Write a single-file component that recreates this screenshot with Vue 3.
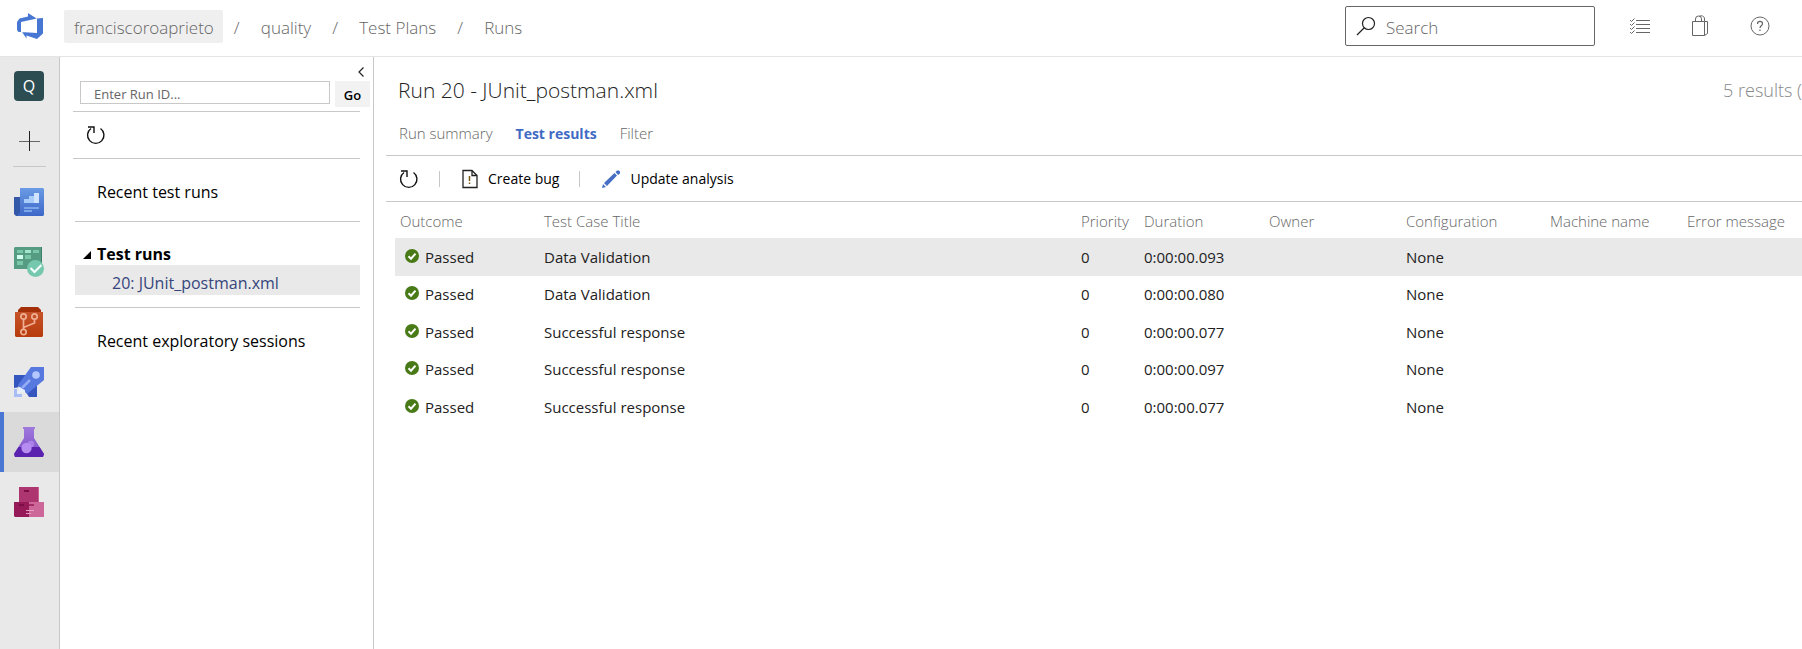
<script setup>
const crumbs = ['quality', 'Test Plans', 'Runs']

const services = [
  { id: 'boards', label: 'Overview' },
  { id: 'work', label: 'Boards' },
  { id: 'repos', label: 'Repos' },
  { id: 'pipelines', label: 'Pipelines' },
  { id: 'tests', label: 'Test Plans', active: true },
  { id: 'artifacts', label: 'Artifacts' },
]

const columns = [
  { key: 'outcome', label: 'Outcome' },
  { key: 'title', label: 'Test Case Title' },
  { key: 'priority', label: 'Priority' },
  { key: 'duration', label: 'Duration' },
  { key: 'owner', label: 'Owner' },
  { key: 'configuration', label: 'Configuration' },
  { key: 'machine', label: 'Machine name' },
  { key: 'error', label: 'Error message' },
]

const results = [
  { title: 'Data Validation', duration: '0:00:00.093', selected: true },
  { title: 'Data Validation', duration: '0:00:00.080' },
  { title: 'Successful response', duration: '0:00:00.077' },
  { title: 'Successful response', duration: '0:00:00.097' },
  { title: 'Successful response', duration: '0:00:00.077' },
]
</script>

<template>
  <div class="shell">
    <header class="topbar">
      <a class="logo" href="#" aria-label="Home">
        <svg width="26" height="26" viewBox="0 0 26 26">
          <path
            fill="#4877d3"
            fill-rule="evenodd"
            d="M0 9l2.500-3.500L11 3.500V0l8.500 5.500L26 5v15.500L20 26 9.500 22.500V25.500L5 19H1.500L0 17zM4 9v10l16 1V5.500z"
          />
        </svg>
      </a>
      <nav class="crumbs" aria-label="Breadcrumb">
        <a class="org" href="#">franciscoroaprieto</a>
        <template v-for="crumb in crumbs" :key="crumb">
          <span class="slash">/</span>
          <a href="#">{{ crumb }}</a>
        </template>
      </nav>
      <label class="search">
        <svg width="20" height="20" viewBox="0 0 20 20" fill="none" stroke="#222">
          <circle cx="12.500" cy="7.500" r="6" stroke-width="1.200" />
          <path d="M8.500 11.500 1 19" stroke-width="1.300" />
        </svg>
        <input type="text" placeholder="Search" aria-label="Search" />
      </label>
      <div class="top-actions">
        <button type="button" aria-label="Work items">
          <svg width="20" height="16" viewBox="0 0 20 16" fill="none" stroke="#666">
            <path d="M6 2.500h14M6 6.500h14M6 10.500h14M6 14.500h14" />
            <path d="M0 2l1.500 1.500L4.500.5M0 6l1.500 1.500 3-3M0 10l1.500 1.500 3-3M0 14l1.500 1.500 3-3" />
          </svg>
        </button>
        <button type="button" aria-label="Marketplace">
          <svg width="18" height="22" viewBox="0 0 18 22" fill="none" stroke="#666">
            <path d="M1.500 6.500h12v14h-12zM13.500 6.500h3v12l-3 2M4.500 6.500V4a3 3 0 0 1 6 0v2.500M8 1.500c2.500-1.500 5.500-.5 5.500 2.500v2.500" />
          </svg>
        </button>
        <button type="button" aria-label="Help">
          <svg width="20" height="20" viewBox="0 0 20 20" fill="none" stroke="#666">
            <circle cx="10" cy="10" r="9" />
            <path d="M7.500 8c0-3.500 5-3.200 5-.3 0 2-2.500 2.200-2.500 4.300M10 13.500v1.500" stroke-width="1.200" />
          </svg>
        </button>
      </div>
    </header>

    <div class="body">
      <nav class="rail" aria-label="Services">
        <a class="project" href="#">Q</a>
        <button class="add" type="button" aria-label="Add">
          <svg width="22" height="22" viewBox="0 0 22 22" stroke-width="1">
            <path d="M0 11.500h21" stroke="#666" />
            <path d="M10.500 1v20" stroke="#222" />
          </svg>
        </button>
        <div class="rail-line"></div>
        <a
          v-for="service in services"
          :key="service.id"
          class="service"
          :class="{ active: service.active }"
          href="#"
          :aria-label="service.label"
        >
          <svg v-if="service.id === 'boards'" width="30" height="30" viewBox="0 0 30 30">
            <defs>
              <linearGradient id="gOverview" x1="0" y1="0" x2="0" y2="1">
                <stop offset="0" stop-color="#6a9be4" />
                <stop offset="1" stop-color="#3e68c8" />
              </linearGradient>
            </defs>
            <path d="M0 10h6v19H2l-2-2z" fill="#3358a8" />
            <path d="M6 1h23l1 1v26l-1 1H3l3-3z" fill="url(#gOverview)" />
            <path d="M10 16v-4h5v-3h5V6h5v10z" fill="#a9cdfa" />
            <path d="M20 6h5v10h-5z" fill="#d0e4ff" />
            <path d="M10 20h15v2H10zM10 23h8v2h-8z" fill="#7ba6ea" />
          </svg>
          <svg v-else-if="service.id === 'work'" width="30" height="30" viewBox="0 0 30 30">
            <path d="M1 0h26v22H0V1z" fill="#569c83" />
            <path d="M27 0h1v20h-1z" fill="#3e8069" />
            <path d="M3 3h6v3H3zM19 3h6v3h-6zM11 8h6v4h-6zM3 14h6v4H3z" fill="#79c6a9" />
            <path d="M11 3h6v3h-6z" fill="#a0e5cc" />
            <path d="M3 8h6v4H3z" fill="#d0fff0" />
            <circle cx="21.500" cy="21.500" r="8.500" fill="#75c8ad" />
            <path d="m16.500 21 4 4 7-7" fill="none" stroke="#f4fffb" stroke-width="2.200" />
          </svg>
          <svg v-else-if="service.id === 'repos'" width="30" height="30" viewBox="0 0 30 30">
            <defs>
              <linearGradient id="gRepos" x1="0" y1="0" x2="0" y2="1">
                <stop offset="0" stop-color="#c6542a" />
                <stop offset="1" stop-color="#b73b0c" />
              </linearGradient>
            </defs>
            <path d="M4 6V3l3-3h17l3 3v3z" fill="#a33008" />
            <path d="M1 5h28v24l-1 1H2l-1-1z" fill="url(#gRepos)" />
            <g fill="none" stroke="#efae93" stroke-width="1.700">
              <circle cx="9.500" cy="9.500" r="2.700" />
              <circle cx="20.500" cy="9.500" r="2.700" />
              <circle cx="9.500" cy="25" r="2.700" />
              <path d="M9.500 12.500V22M20.500 12.500V16l-11 4.500" />
            </g>
          </svg>
          <svg v-else-if="service.id === 'pipelines'" width="30" height="30" viewBox="0 0 30 30">
            <path d="M0 8h12L6 20l-6 1zM10 22l13-8v16h-8z" fill="#3556bf" />
            <path d="M17 0h13v13L13 27l-9-9z" fill="#5678df" />
            <circle cx="22" cy="8" r="3.800" fill="#b3c6ff" />
            <path d="m8 21 8-8" stroke="#94adf5" stroke-width="2.500" />
            <path d="M0 22h3v5h5v3H0z" fill="#a8bdf5" />
            <path d="m4 19 1.500 4L3 25.500l2 1.500 2.500-2.500L11 26v-3l-2.500-1z" fill="#e8efff" />
          </svg>
          <svg v-else-if="service.id === 'tests'" width="30" height="30" viewBox="0 0 30 30">
            <defs>
              <linearGradient id="gTests" x1="0" y1="0" x2="0" y2="1">
                <stop offset="0" stop-color="#a07add" />
                <stop offset="1" stop-color="#7b4cc8" />
              </linearGradient>
            </defs>
            <path d="M9 0h12v2h-1v9l10 16-1 3H1l-1-3 10-16V2H9z" fill="url(#gTests)" />
            <path d="M4.500 20h21L30 27l-1 3H1l-1-3z" fill="#5a22ae" />
            <circle cx="12.500" cy="21" r="5.200" fill="#b68cf0" />
            <circle cx="17" cy="17" r="3.200" fill="#b68cf0" fill-opacity=".75" />
          </svg>
          <svg v-else width="30" height="30" viewBox="0 0 30 30">
            <path d="M5 0h20v15H5z" fill="#ad3570" />
            <path d="M24 0h1v15h-1z" fill="#c9608f" />
            <path d="M0 15h15v15H1l-1-1z" fill="#951a57" />
            <path d="M15 15h15v15H15z" fill="#cd6699" />
            <path d="M10 3h5v2h-5zM5 17h5v2H5z" fill="#7d0d44" />
            <path d="M15 17h5v2h-5z" fill="#a42b65" />
            <path d="M12 23h8v1h-8zM12 26h5v1h-5z" fill="#e5a0c2" />
          </svg>
        </a>
      </nav>

      <aside class="explorer">
        <div class="collapse-row">
          <button type="button" aria-label="Collapse panel">
            <svg width="8" height="10" viewBox="0 0 8 10" fill="none" stroke="#222" stroke-width="1.200">
              <path d="M6.500.5 2 5l4.500 4.500" />
            </svg>
          </button>
        </div>
        <form class="run-form" @submit.prevent>
          <input type="text" placeholder="Enter Run ID..." aria-label="Run ID" />
          <button type="submit">Go</button>
        </form>
        <div class="refresh-row">
          <button type="button" aria-label="Refresh">
            <svg width="20" height="20" viewBox="0 0 20 20" fill="none" stroke="#111" stroke-width="1.400">
              <path d="M14.500 3.500A8.200 8.200 0 1 1 5 3.500M2 2h6v6" />
            </svg>
          </button>
        </div>
        <a class="node" href="#">Recent test runs</a>
        <section class="group">
          <h2>
            <svg width="8" height="8" viewBox="0 0 8 8"><path d="M8 0v8H0z" /></svg>
            Test runs
          </h2>
          <a class="selected-run" href="#">20: JUnit_postman.xml</a>
        </section>
        <a class="node" href="#">Recent exploratory sessions</a>
      </aside>

      <main class="main">
        <div class="title-row">
          <h1>Run 20 - JUnit_postman.xml</h1>
          <span class="count">5 results (</span>
        </div>
        <nav class="tabs" aria-label="Run views">
          <a href="#">Run summary</a>
          <a class="current" href="#">Test results</a>
          <a href="#">Filter</a>
        </nav>
        <div class="toolbar">
          <button type="button" aria-label="Refresh results">
            <svg width="20" height="20" viewBox="0 0 20 20" fill="none" stroke="#111" stroke-width="1.400">
              <path d="M14.500 3.500A8.200 8.200 0 1 1 5 3.500M2 2h6v6" />
            </svg>
          </button>
          <span class="sep"></span>
          <button type="button">
            <svg width="16" height="20" viewBox="0 0 16 20" fill="none" stroke="#222" stroke-width="1.300">
              <path d="M1 1.500h9l5 5v12H1zM10 1.500v5h5" />
              <path d="M7.500 7v5M7.500 13.500v1.500" stroke="#7a5a10" stroke-width="1.500" />
            </svg>
            Create bug
          </button>
          <span class="sep"></span>
          <button type="button">
            <svg width="18" height="18" viewBox="0 0 18 18" fill="#456fc4">
              <path d="m0 18 1-4 3 3zM2 13 12.500 3 15 5.500 5 16zM13.500 2 15 .5h2l1 1v2L16 5z" />
            </svg>
            Update analysis
          </button>
        </div>
        <table class="grid">
          <colgroup>
            <col v-for="col in columns" :key="col.key" :class="'c-' + col.key" />
          </colgroup>
          <thead>
            <tr>
              <th v-for="col in columns" :key="col.key" scope="col">{{ col.label }}</th>
            </tr>
          </thead>
          <tbody>
            <tr v-for="(row, i) in results" :key="i" :class="{ selected: row.selected }">
              <td>
                <span class="outcome">
                  <svg width="14" height="14" viewBox="0 0 14 14">
                    <circle cx="7" cy="7" r="7" fill="#487a17" />
                    <path d="m3.500 7.300 2.500 2.400 4.500-5" fill="none" stroke="#fff" stroke-width="2" />
                  </svg>
                  Passed
                </span>
              </td>
              <td>{{ row.title }}</td>
              <td>0</td>
              <td>{{ row.duration }}</td>
              <td></td>
              <td>None</td>
              <td></td>
              <td></td>
            </tr>
          </tbody>
        </table>
      </main>
    </div>
  </div>
</template>

<style>
body {
  margin: 0;
  background: #fff;
}
</style>

<style scoped>
.shell {
  display: flex;
  flex-direction: column;
  min-height: 100vh;
  overflow: hidden;
  font-family: "Open Sans", "Noto Sans", sans-serif;
  font-size: 15px;
  color: #222;
}
.shell * {
  box-sizing: border-box;
}
a {
  color: inherit;
  text-decoration: none;
}
button {
  display: flex;
  align-items: center;
  padding: 0;
  border: 0;
  background: none;
  color: inherit;
  font: inherit;
}
input {
  min-width: 0;
  border: 0;
  outline: 0;
  background: none;
  font: inherit;
}
svg {
  display: block;
  flex: none;
}

.topbar {
  display: flex;
  align-items: center;
  height: 57px;
  padding: 0 32px 4px 17px;
  border-bottom: 1px solid #e4e4e4;
  color: #666;
}
.logo {
  width: 47px;
}
.crumbs {
  display: flex;
  flex: 1;
  align-items: center;
  font-size: 17px;
  font-weight: 300;
}
.org {
  padding: 2px 9px 0 10px;
  border-radius: 2px;
  background: #efefef;
  line-height: 31px;
}
.crumbs a:not(.org),
.slash {
  padding-top: 2px;
}
.slash {
  width: 48px;
  padding-left: 21px;
}
.org + .slash {
  width: 38px;
  padding-left: 11px;
}
.search {
  display: flex;
  align-items: center;
  gap: 10px;
  width: 250px;
  height: 40px;
  padding: 0 10px;
  border: 1px solid #666;
  border-radius: 2px;
}
.search input {
  flex: 1;
  padding: 2px 0 0;
  font-size: 17px;
  font-weight: 300;
}
input::placeholder {
  color: #666;
  opacity: 1;
}
.top-actions {
  display: flex;
  align-items: center;
  gap: 41px;
  padding-left: 35px;
}

.body {
  display: flex;
  flex: 1;
}
.rail {
  display: flex;
  flex: none;
  flex-direction: column;
  width: 60px;
  padding-top: 14px;
  border-right: 1px solid #c8c8c8;
  background: #e9e9e9;
}
.project {
  width: 30px;
  margin-left: 14px;
  border-radius: 4px;
  background: #2c4d52;
  color: #fff;
  font-size: 16px;
  line-height: 30px;
  text-align: center;
}
.add {
  margin: 29px 0 0 19px;
}
.rail-line {
  width: 33px;
  margin: 14px 0 5px 13px;
  border-top: 1px solid #c8c8c8;
}
.service {
  display: flex;
  align-items: center;
  height: 60px;
  padding-left: 14px;
}
.service.active {
  padding-left: 10px;
  border-left: 4px solid #4877d3;
  background: #dadada;
}

.explorer {
  flex: none;
  width: 314px;
  padding: 0 13px;
  border-right: 1px solid #c8c8c8;
  color: #000;
  font-size: 16px;
}
.collapse-row {
  display: flex;
  justify-content: flex-end;
  height: 24px;
  margin-right: -5px;
  padding-top: 10px;
}
.collapse-row button {
  height: 10px;
}
.run-form {
  display: flex;
  gap: 5px;
  height: 30px;
  padding-left: 7px;
  margin-right: -10px;
  font-size: 13px;
}
.run-form input {
  flex: 1;
  height: 23px;
  padding: 2px 13px 0;
  border: 1px solid #c8c8c8;
}
.run-form button {
  justify-content: center;
  width: 35px;
  height: 26px;
  padding-top: 2px;
  background: #f2f2f2;
  font-weight: 600;
}
.refresh-row {
  display: flex;
  align-items: center;
  height: 48px;
  padding-left: 13px;
  border: solid #c8c8c8;
  border-width: 1px 0;
}
.node {
  display: block;
  padding: 4px 0 0 24px;
  line-height: 58px;
}
.group {
  height: 87px;
  margin-left: 2px;
  padding-top: 22px;
  border: solid #c8c8c8;
  border-width: 1px 0;
}
.group h2 {
  display: flex;
  align-items: center;
  gap: 6px;
  margin: 0;
  padding-left: 8px;
  font-size: 16px;
  font-weight: 700;
  line-height: 21px;
}
.selected-run {
  display: block;
  padding: 6px 0 0 37px;
  background: #e9e9e9;
  color: #36457c;
  line-height: 24px;
}

.main {
  flex: 1;
  min-width: 0;
  padding-left: 12px;
}
.title-row {
  display: flex;
  align-items: center;
  justify-content: space-between;
  height: 64px;
  padding: 2px 0 0 12px;
}
h1 {
  margin: 0;
  font-size: 21px;
  font-weight: 300;
}
.count {
  color: #888;
  font-size: 18px;
  font-weight: 300;
}
.tabs {
  display: flex;
  align-items: center;
  gap: 23px;
  height: 34px;
  padding: 0 0 10px 13px;
  color: #666;
  font-weight: 300;
}
.tabs .current {
  color: #3f6bc4;
  font-size: 14px;
  font-weight: 700;
}
.toolbar {
  display: flex;
  align-items: center;
  height: 47px;
  padding-left: 13px;
  border: solid #c8c8c8;
  border-width: 1px 0;
  color: #000;
  font-size: 14px;
}
.toolbar button {
  gap: 10px;
}
.sep {
  width: 1px;
  height: 16px;
  margin: 0 22px 0 20px;
  background: #c8c8c8;
}
.grid {
  width: calc(100% - 9px);
  margin-left: 9px;
  border-collapse: collapse;
  table-layout: fixed;
}
.c-outcome { width: 144px; }
.c-priority { width: 63px; }
.c-duration { width: 125px; }
.c-owner { width: 137px; }
.c-configuration { width: 144px; }
.c-machine { width: 137px; }
.c-error { width: 120px; }
th,
td {
  padding: 0 5px;
  text-align: left;
  white-space: nowrap;
}
th {
  height: 36px;
  padding-top: 2px;
  color: #666;
  font-weight: 300;
}
td {
  height: 38px;
}
tr:nth-child(even) td {
  height: 37px;
  padding-bottom: 1px;
}
.selected {
  background: #e9e9e9;
}
.outcome {
  display: flex;
  align-items: center;
  gap: 6px;
  padding-left: 5px;
}
.outcome svg {
  margin-bottom: 2px;
}
</style>
